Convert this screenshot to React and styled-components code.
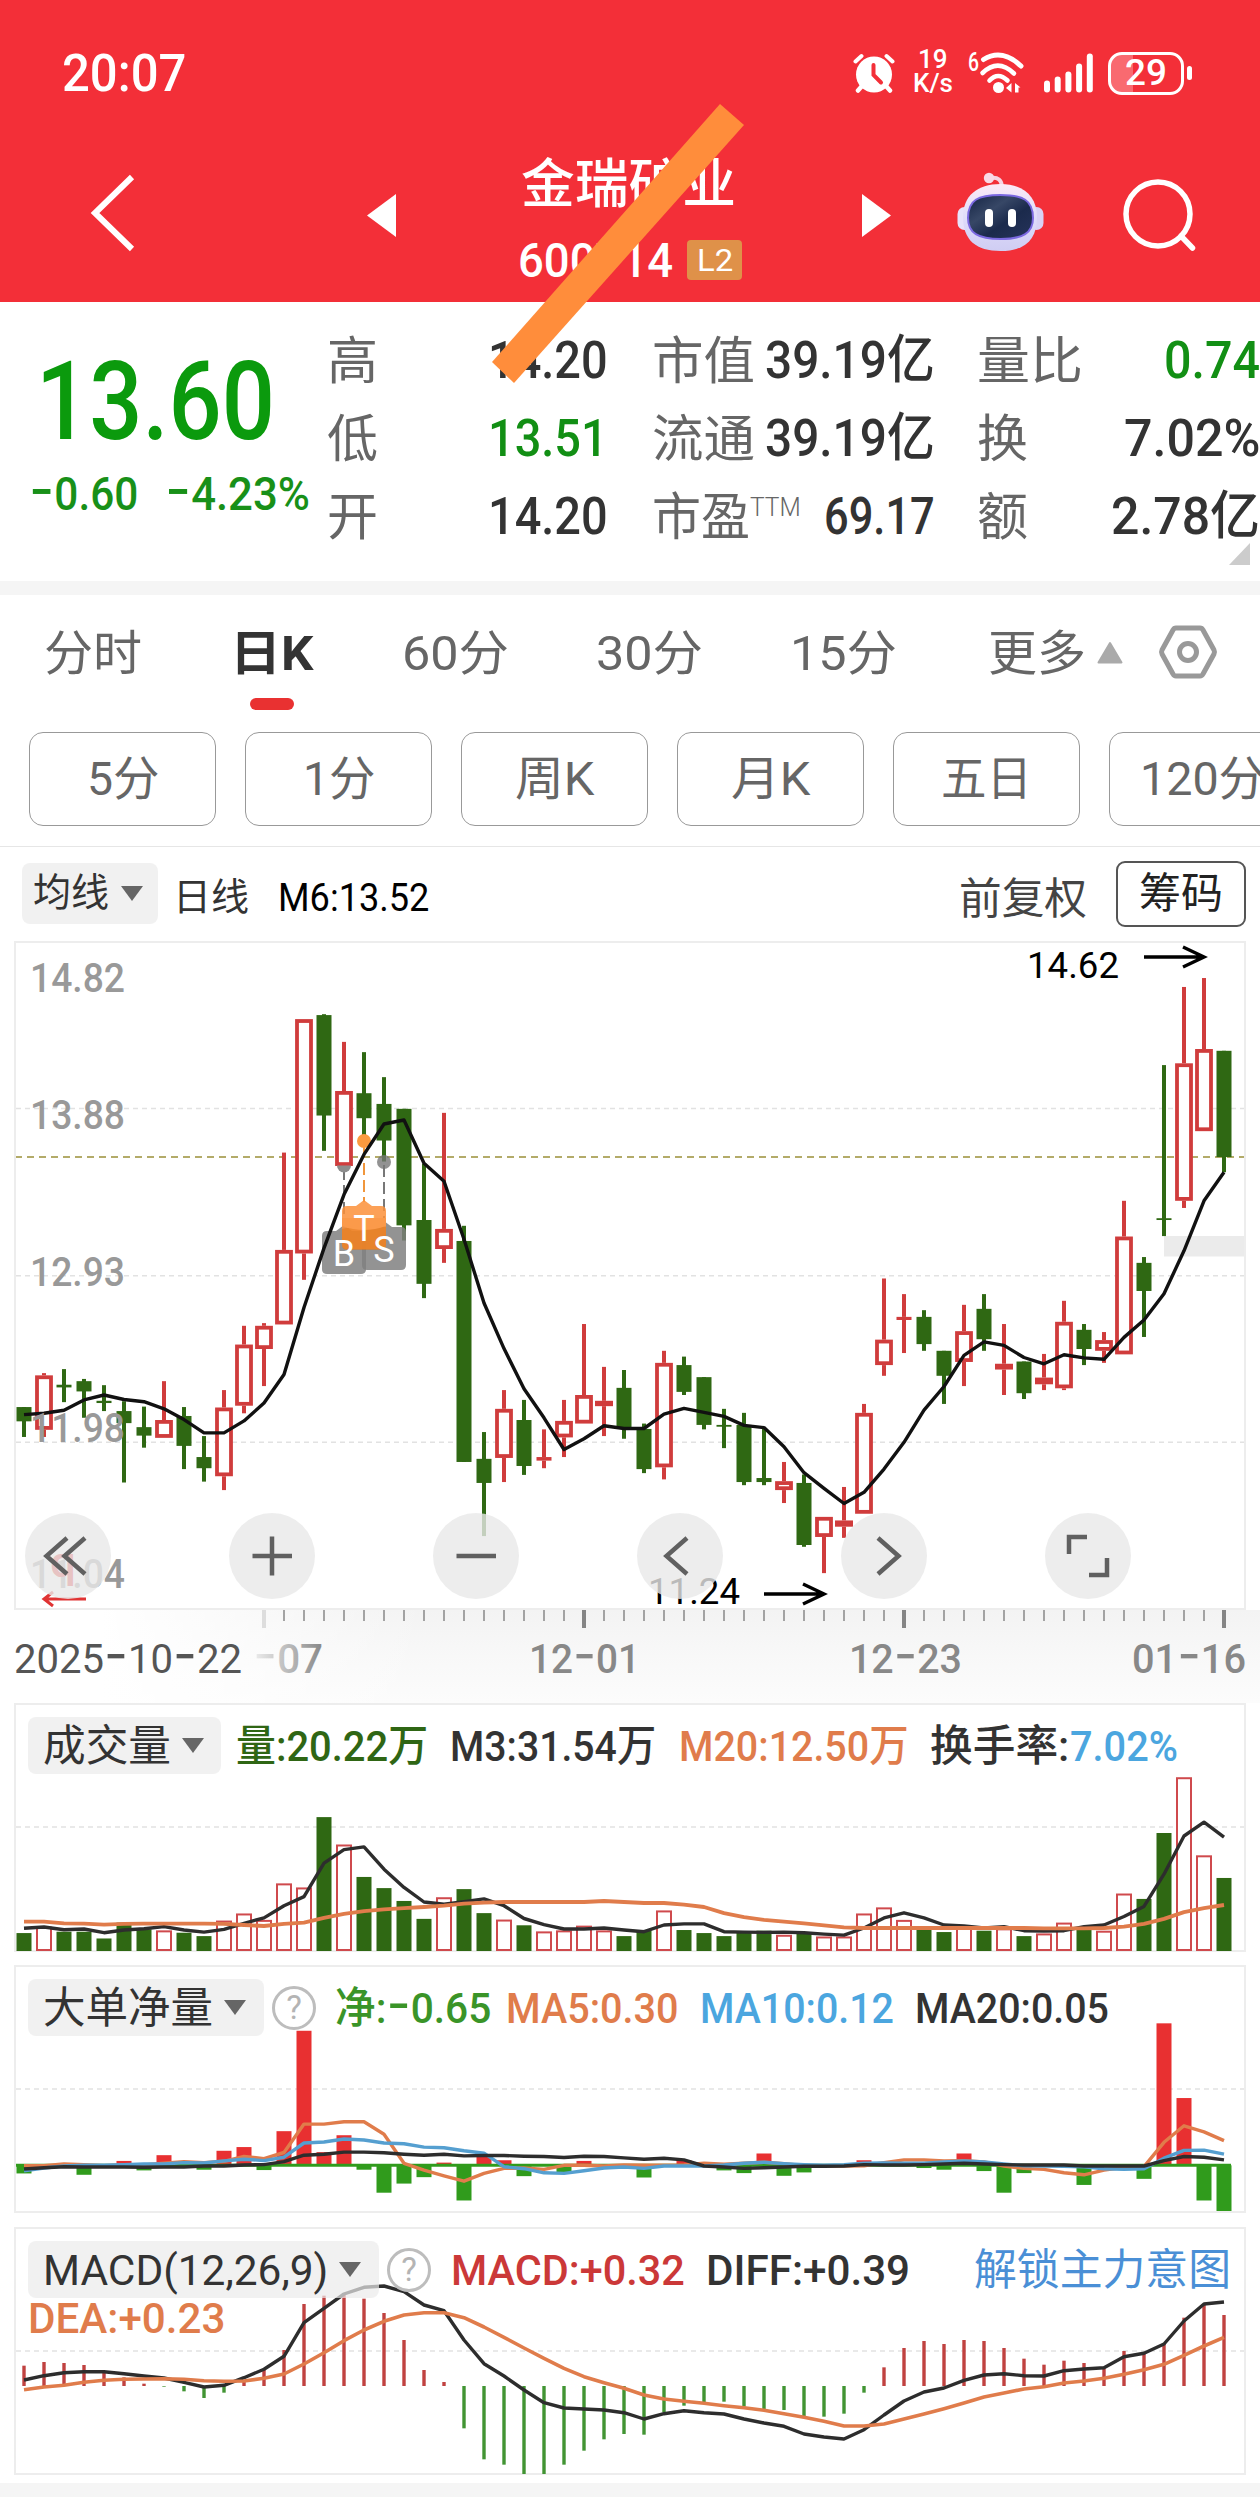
import React, { useLayoutEffect, useRef, useState } from "react";
import styled, { createGlobalStyle } from "styled-components";

const C = {
  brand: "#f32f38",
  up: "#d03c3c",
  down: "#2f6813",
  orange: "#e07c4b",
  blue: "#4ba6df",
  ink: "#333333",
};
const STACK = 'Roboto, "Noto Sans CJK SC", sans-serif';

const Global = createGlobalStyle`
  body { margin: 0; background: #fff; }
  * { box-sizing: border-box; }
  svg { display: block; flex: none; }
  .dash { font-family: Inter, sans-serif; font-size: 1.3em; font-weight: 400; line-height: 0; }
`;

const Page = styled.div`
  position: relative;
  width: 1260px;
  height: 2510px;
  overflow: hidden;
  background: #fff;
  font-family: ${STACK};
  color: ${C.ink};
`;

/* ---------- text that is condensed to a set width ---------- */
const FitBox = styled.span`
  display: inline-block;
  flex: none;
  width: ${(p) => p.$w}px;
  margin-left: ${(p) => p.$ml || 0}px;
  margin-top: ${(p) => p.$mt || 0}px;
  font-size: ${(p) => p.$size}px;
  font-weight: ${(p) => p.$weight || 400};
  line-height: ${(p) => Math.round(p.$size * 1.2)}px;
  color: ${(p) => p.$color || "inherit"};
  white-space: nowrap;
`;
const FitInner = styled.span`
  display: inline-block;
  transform-origin: 0 50%;
`;

const dashed = (s, Tag) =>
  s.split(/(-)/).map((part, i) =>
    part === "-" ? <Tag key={i} className="dash">-</Tag> : part
  );

function Fit({ w, ml, mt, size, weight, color, children }) {
  const ref = useRef(null);
  const [k, setK] = useState(1);
  useLayoutEffect(() => {
    setK(w / ref.current.offsetWidth);
  }, [w, children]);
  return (
    <FitBox $w={w} $ml={ml} $mt={mt} $size={size} $weight={weight} $color={color}>
      <FitInner ref={ref} style={{ transform: `scaleX(${k})` }}>
        {dashed(children, "span")}
      </FitInner>
    </FitBox>
  );
}

/* ---------- header ---------- */
const Header = styled.header`
  height: 302px;
  background: ${C.brand};
  color: #fff;
`;
const StatusBar = styled.div`
  height: 146px;
  display: flex;
  align-items: center;
  padding: 0 68px 0 62px;
`;
const Spacer = styled.div`
  flex: 1;
`;
const StatusGap = styled.div`
  flex: none;
  width: ${(p) => p.$w}px;
`;
const NetSpeed = styled.div`
  display: flex;
  flex-direction: column;
  align-items: center;
  width: 42px;
  margin: 0 0 0 17px;
`;
const Battery = styled.div`
  display: flex;
  align-items: center;
  justify-content: center;
  width: 76px;
  height: 43px;
  margin-left: 14px;
  border: 3.5px solid #fff;
  border-radius: 14px;
  background: linear-gradient(90deg, #f96a70 32%, transparent 32%);
`;
const BatteryTip = styled.div`
  width: 5px;
  height: 14px;
  margin-left: 3px;
  border-radius: 3px;
  background: #fff;
`;
const NavRow = styled.div`
  height: 156px;
  display: grid;
  grid-template-columns: 367px 152px 343px 95px 164px 1fr;
  align-items: start;
`;
const NavCell = styled.div`
  padding-left: ${(p) => p.$pl || 0}px;
  padding-top: ${(p) => p.$pt || 0}px;
`;
const CodeLine = styled.div`
  display: flex;
  align-items: center;
  height: 42px;
  margin-top: 22px;
`;
const Level = styled.span`
  display: flex;
  align-items: center;
  justify-content: center;
  width: 55px;
  height: 40px;
  margin-left: 14px;
  border-radius: 4px;
  background: #df9149;
`;
const Strike = styled.svg`
  position: absolute;
  left: 480px;
  top: 95px;
`;

/* ---------- quote ---------- */
const Quote = styled.section`
  height: 279px;
  display: grid;
  grid-template-columns: 327px 281px 369px 283px;
`;
const LastPrice = styled.div`
  padding: 35px 0 0 36px;
`;
const Change = styled.div`
  display: flex;
  margin-left: -7px;
  margin-top: -2px;
`;
const Column = styled.div`
  padding-top: 20px;
  padding-left: ${(p) => p.$pl || 0}px;
`;
const Pair = styled.div`
  height: 78px;
  display: flex;
  align-items: center;
  justify-content: space-between;
  padding-right: ${(p) => p.$pr || 0}px;
`;
const LabelGroup = styled.span`
  display: flex;
`;
const Corner = styled.i`
  display: block;
  width: 21px;
  height: 22px;
  margin: -13px 10px 0 auto;
  background: #ccc;
  clip-path: polygon(100% 0, 100% 100%, 0 100%);
`;
const Band = styled.div`
  height: 14px;
  background: #f5f5f5;
`;

/* ---------- period tabs ---------- */
const Tabs = styled.nav`
  height: 137px;
  display: flex;
  padding-left: 44px;
  color: #666;
`;
const Tab = styled.div`
  display: flex;
  flex-direction: column;
  align-items: center;
  padding-top: 30px;
  margin-left: ${(p) => p.$ml || 0}px;
`;
const Underline = styled.i`
  width: 44px;
  height: 12px;
  margin-top: 15px;
  border-radius: 6px;
  background: #e93131;
`;
const TabIcon = styled.div`
  padding-top: ${(p) => p.$pt}px;
  margin-left: ${(p) => p.$ml}px;
`;
const Chips = styled.div`
  height: 115px;
  display: flex;
  gap: 29px;
  padding-left: 29px;
  overflow: hidden;
  border-bottom: 1.5px solid #e6e6e6;
`;
const Chip = styled.div`
  flex: none;
  width: 187px;
  height: 94px;
  display: flex;
  align-items: center;
  justify-content: center;
  border: 1.5px solid #999;
  border-radius: 14px;
  color: #666;
`;

/* ---------- indicator bars ---------- */
const MaBar = styled.div`
  height: 94px;
  display: flex;
  align-items: flex-start;
  padding: 16px 14px 0 22px;
`;
const Picker = styled.div`
  display: flex;
  align-items: center;
  flex: none;
  width: ${(p) => p.$w}px;
  height: ${(p) => p.$h}px;
  border-radius: 8px;
  background: rgba(235, 235, 235, 0.7);
`;
const Caret = styled.i`
  width: 22px;
  height: 15px;
  margin-left: ${(p) => p.$ml}px;
  background: #666;
  clip-path: polygon(0 0, 100% 0, 50% 100%);
`;
const Outlined = styled.div`
  display: flex;
  align-items: center;
  justify-content: center;
  width: 130px;
  height: 66px;
  margin: -2px 0 0 29px;
  border: 2px solid #555;
  border-radius: 9px;
`;

/* ---------- chart panels ---------- */
const Panel = styled.section`
  display: grid;
  width: 1232px;
  height: ${(p) => p.$h}px;
  margin: 0 14px ${(p) => p.$mb || 0}px;
  border: 2px solid #ededed;
  > * {
    grid-area: 1 / 1;
    min-width: 0;
  }
`;
const PanelHead = styled.div`
  align-self: start;
  padding: 12px 0 0 12px;
`;
const HeadRow = styled.div`
  height: 57px;
  display: flex;
  align-items: center;
`;
const Help = styled.span`
  display: flex;
  align-items: center;
  justify-content: center;
  flex: none;
  width: 44px;
  height: 44px;
  margin-left: 8px;
  border: 3px solid #bdbdbd;
  border-radius: 50%;
  font-size: 33px;
  line-height: 36px;
  color: #b4b4b4;
`;
const Controls = styled.div`
  align-self: end;
  display: flex;
  gap: 118px;
  padding: 0 0 9px 9px;
`;
const RoundButton = styled.button`
  display: flex;
  align-items: center;
  justify-content: center;
  width: 86px;
  height: 86px;
  padding: 0;
  border: 0;
  border-radius: 50%;
  background: rgba(233, 233, 233, 0.8);
`;
const Axis = styled.div`
  height: 93px;
  background: linear-gradient(90deg, #fff 8%, rgba(255, 255, 255, 0) 34%),
    linear-gradient(180deg, #f3f3f3 0%, #f9f9f9 60%, #fcfcfc 100%);
`;

/* ---------- series data, as screen rows of the 61 sessions ---------- */
const X = (i) => 24 + 20 * i;
const P = (v) => 920 + v / 2.24;
const V = (v) => 1690 + v / 2.958;
const M = (v) => 2200 + v / 3;

const CANDLES = `G 1091 1091 1123 1158|R 1015 1020 1142 1158|G 1006 1041 1047 1080|G 1028 1033 1056 1115|G 1042 1077 1082 1100|G 1078 1100 1127 1260|G 1090 1136 1155 1182|R 1033 1120 1160 1160|G 1091 1111 1178 1230|G 1156 1203 1228 1258|R 1053 1092 1246 1277|R 909 951 1088 1105|R 903 909 961 1044|R 521 739 906 906|R 222 222 747 806|G 211 213 438 517|R 273 383 551 551|G 296 388 444 492|G 352 412 494 541|G 423 423 684 718|G 546 672 815 847|R 432 692 737 768|G 685 719 1214 1214|G 1147 1207 1261 1380|R 1053 1095 1205 1259|G 1075 1120 1223 1243|R 1141 1203 1211 1228|R 1075 1122 1159 1203|R 905 1064 1128 1128|R 1001 1077 1089 1156|G 1008 1048 1137 1162|G 1128 1140 1230 1239|R 965 992 1226 1253|G 978 997 1057 1064|G 1024 1024 1131 1141|G 1095 1131 1135 1183|G 1104 1131 1259 1266|G 1140 1250 1259 1266|R 1214 1257 1277 1306|G 1242 1261 1400 1404|R 1337 1337 1382 1463|R 1270 1345 1359 1384|R 1084 1104 1330 1330|R 803 940 997 1021|R 838 889 896 970|G 874 889 950 965|G 965 965 1021 1084|R 862 921 990 1044|G 838 871 939 965|R 905 994 1007 1064|G 989 989 1060 1073|R 972 1025 1040 1053|R 853 900 1049 1053|G 905 918 961 997|R 923 941 965 992|R 629 709 973 973|G 755 768 831 934|G 325 668 671 708|R 150 321 629 645|R 130 289 473 473|G 293 293 531 565`
  .split("|")
  .map((row) => {
    const [kind, ...v] = row.split(" ");
    return [kind, ...v.map(Number)];
  });

const MA6 = [1108, 1105, 1098, 1075, 1064, 1074, 1079, 1095, 1119, 1149, 1149, 1122, 1082, 1018, 868, 735, 615, 525, 457, 448, 545, 585, 715, 858, 960, 1050, 1115, 1186, 1162, 1133, 1139, 1139, 1107, 1094, 1103, 1112, 1132, 1137, 1180, 1238, 1273, 1307, 1282, 1230, 1170, 1098, 1045, 975, 945, 953, 980, 994, 974, 981, 984, 935, 896, 837, 741, 629, 565];

const VOL = [719, 700, 715, 715, 735, 688, 708, 711, 718, 728, 682, 661, 680, 572, 584, 376, 457, 553, 586, 624, 677, 613, 589, 660, 679, 696, 714, 711, 697, 711, 728, 712, 652, 710, 719, 728, 713, 712, 724, 718, 729, 729, 661, 643, 680, 708, 716, 697, 712, 705, 728, 720, 688, 709, 712, 602, 618, 423, 258, 489, 556];
const VM3 = [705, 701, 709, 707, 718, 710, 706, 700, 710, 716, 708, 690, 674, 638, 611, 512, 472, 464, 530, 584, 627, 634, 626, 618, 638, 676, 694, 707, 707, 704, 710, 715, 695, 692, 692, 715, 716, 717, 716, 718, 722, 725, 704, 674, 659, 674, 695, 698, 704, 700, 712, 713, 712, 700, 695, 670, 640, 545, 432, 391, 435];
const VM20 = [685, 685, 690, 691, 694, 692, 691, 691, 691, 691, 692, 695, 698, 692, 688, 674, 662, 654, 649, 645, 642, 638, 632, 629, 627, 627, 627, 627, 627, 624, 627, 630, 630, 635, 642, 660, 672, 680, 685, 690, 696, 702, 704, 704, 704, 704, 704, 704, 704, 704, 704, 705, 705, 705, 704, 700, 692, 677, 657, 645, 636];

const NET = { 0: 1430, 3: 1434, 5: 1393, 6: 1421, 7: 1376, 9: 1419, 10: 1363, 11: 1352, 12: 1420, 13: 1305, 14: 1008, 15: 1367, 16: 1317, 17: 1419, 18: 1487, 19: 1460, 20: 1441, 21: 1398, 22: 1510, 23: 1378, 24: 1391, 25: 1438, 27: 1427, 28: 1393, 31: 1442, 33: 1391, 34: 1398, 35: 1421, 36: 1429, 37: 1371, 38: 1437, 39: 1427, 42: 1391, 45: 1414, 46: 1419, 47: 1371, 48: 1423, 49: 1487, 50: 1429, 53: 1464, 56: 1446, 57: 986, 58: 1207, 59: 1510, 60: 1543 };
const N5 = [1407, 1407, 1402, 1404, 1407, 1405, 1405, 1400, 1395, 1398, 1394, 1380, 1386, 1368, 1284, 1284, 1277, 1277, 1314, 1400, 1420, 1437, 1453, 1430, 1415, 1414, 1418, 1406, 1406, 1408, 1405, 1406, 1406, 1405, 1400, 1403, 1400, 1397, 1401, 1407, 1408, 1408, 1407, 1398, 1390, 1390, 1393, 1392, 1396, 1408, 1415, 1418, 1428, 1434, 1420, 1412, 1410, 1338, 1289, 1307, 1333];
const N10 = [1422, 1414, 1408, 1406, 1406, 1404, 1402, 1402, 1398, 1399, 1393, 1388, 1392, 1382, 1340, 1337, 1328, 1331, 1340, 1342, 1352, 1354, 1363, 1370, 1410, 1416, 1428, 1430, 1422, 1414, 1411, 1415, 1408, 1408, 1408, 1405, 1400, 1397, 1401, 1404, 1406, 1404, 1400, 1399, 1400, 1400, 1396, 1393, 1396, 1402, 1407, 1408, 1409, 1410, 1416, 1418, 1416, 1385, 1362, 1361, 1373];
const N20 = [1417, 1413, 1410, 1411, 1411, 1411, 1412, 1411, 1411, 1408, 1408, 1405, 1404, 1395, 1376, 1373, 1367, 1367, 1369, 1373, 1376, 1373, 1378, 1377, 1377, 1379, 1380, 1383, 1379, 1380, 1384, 1388, 1385, 1390, 1408, 1411, 1415, 1413, 1411, 1409, 1409, 1408, 1404, 1405, 1405, 1404, 1402, 1400, 1402, 1404, 1405, 1405, 1405, 1408, 1408, 1408, 1408, 1392, 1380, 1382, 1390];

const HIST = [497, 486, 489, 495, 513, 532, 551, 560, 574, 594, 578, 545, 507, 450, 312, 287, 285, 296, 339, 420, 510, 546, 685, 778, 794, 822, 822, 794, 752, 718, 702, 704, 637, 617, 607, 605, 620, 630, 630, 650, 650, 641, 578, 502, 444, 423, 432, 420, 423, 444, 476, 494, 482, 489, 505, 453, 462, 432, 353, 315, 345];
const DIFF = [540, 527, 518, 515, 515, 521, 528, 534, 547, 561, 556, 533, 508, 469, 368, 325, 282, 262, 258, 275, 315, 332, 420, 491, 528, 570, 608, 624, 627, 630, 638, 657, 641, 632, 638, 642, 657, 669, 679, 702, 711, 717, 689, 645, 603, 576, 564, 541, 525, 521, 527, 528, 512, 507, 503, 470, 460, 432, 363, 312, 306];
const DEA = [569, 561, 556, 547, 541, 538, 537, 536, 538, 542, 544, 543, 535, 522, 492, 458, 422, 390, 364, 345, 338, 338, 353, 381, 412, 444, 475, 505, 530, 548, 565, 585, 597, 604, 610, 617, 623, 631, 641, 652, 664, 678, 678, 672, 657, 642, 626, 609, 591, 579, 567, 560, 549, 543, 535, 523, 509, 493, 466, 438, 412];

/* ---------- chart pieces ---------- */
const Line = ({ data, y, color, width = 3.4 }) => (
  <polyline
    points={data.map((v, i) => `${X(i)},${y(v).toFixed(1)}`).join(" ")}
    fill="none"
    stroke={color}
    strokeWidth={width}
    strokeLinejoin="round"
  />
);
const Grid = ({ y }) => (
  <line x1="16" x2="1244" y1={y} y2={y} stroke="#e2e2e2" strokeWidth="1.5" strokeDasharray="5 4" />
);
const Label = ({ x, y, w, size, color, weight = 500, children }) => (
  <text
    x={x}
    y={y}
    textLength={w}
    lengthAdjust="spacingAndGlyphs"
    fontSize={size}
    fontWeight={weight}
    fill={color}
  >
    {dashed(children, "tspan")}
  </text>
);
const Canvas = ({ top, h, children }) => (
  <svg width="1228" height={h} viewBox={`16 ${top} 1228 ${h}`} fontFamily={STACK}>
    {children}
  </svg>
);

function Candle({ i, d }) {
  const [kind, hi, top, bot, lo] = d;
  const x = X(i);
  const t = P(top);
  const b = P(bot);
  if (kind === "G")
    return (
      <g fill={C.down}>
        <rect x={x - 2} width="4" y={P(hi)} height={P(lo) - P(hi)} />
        <rect x={x - 7.5} width="15" y={t} height={Math.max(b - t, 1.8)} />
      </g>
    );
  const thin = b - t < 8;
  return (
    <g>
      <rect x={x - 2} width="4" y={P(hi)} height={Math.max(t - P(hi), 0)} fill={C.up} />
      <rect x={x - 2} width="4" y={b} height={Math.max(P(lo) - b, 0)} fill={C.up} />
      {thin ? (
        <rect x={x - (b - t < 4 ? 7.5 : 9)} width={b - t < 4 ? 15 : 18} y={t} height={b - t} fill={C.up} />
      ) : (
        <rect x={x - 7} width="14" y={t + 1.9} height={b - t - 3.8} fill="#fff" stroke={C.up} strokeWidth="3.8" />
      )}
    </g>
  );
}

function Arrow({ x1, x2, y, color = "#000", head = 21, rise = 10, sw = 3.4 }) {
  const d = x2 > x1 ? -head : head;
  return (
    <path
      d={`M${x1} ${y}H${x2}M${x2 + d} ${y - rise}L${x2} ${y}L${x2 + d} ${y + rise}`}
      fill="none"
      stroke={color}
      strokeWidth={sw}
    />
  );
}

const Tag = ({ x, y, fill }) => (
  <path
    d={`M${x - 22} ${y + 11}q0 -5 5 -5h9l8 -6l8 6h9q5 0 5 5v33q0 5 -5 5h-34q-5 0 -5 -5z`}
    fill={fill}
    fillOpacity="0.85"
  />
);

function PriceChart() {
  return (
    <Canvas top={943} h={665}>
      {[1108.4, 1275.8, 1442.3].map((y) => (
        <Grid key={y} y={y} />
      ))}
      <line x1="15" x2="1246" y1="1157" y2="1157" stroke="#b3ab69" strokeWidth="1.8" strokeDasharray="7 5" />
      <rect x="1164" y="1236" width="82" height="20.5" fill="#ebebeb" />
      {CANDLES.map((d, i) => (
        <Candle key={i} i={i} d={d} />
      ))}
      <g strokeWidth="2" strokeDasharray="12 5">
        <path d="M344 1168V1226M384 1165V1222" stroke="#777" />
        <path d="M364 1146V1202" stroke="#f0963c" />
      </g>
      <path d="M337 1165.5h14a7 7 0 0 1 -14 0z" fill="#8c8c8c" />
      <circle cx="364" cy="1141" r="7" fill="#fb9a3f" />
      <circle cx="384" cy="1162" r="7" fill="#777" fillOpacity="0.8" />
      <Tag x={344} y={1225} fill="#808080" />
      <Tag x={384} y={1221} fill="#808080" />
      <Tag x={364} y={1200} fill="#fb913a" />
      <path d="M342 1229l4 -1l14 -1q5 0 8 0l14 -1l4 1v18q0 5 -5 5h-34q-5 0 -5 -5z" fill="#e57a1a" fillOpacity="0.6" />
      <path d="M342 1226q22 8 44 0v-8h-44z" fill="#fb9a4a" />
      <Line data={MA6} y={P} color="#111" width={3.4} />
      <g fontSize="36" fill="#fff" textAnchor="middle">
        <text x="344" y="1265.5">B</text>
        <text x="384" y="1261.5">S</text>
        <text x="364" y="1240.5">T</text>
      </g>
      <Label x={30} y={991.5} w={95} size={40} color="#999">14.82</Label>
      <Label x={30} y={1128.5} w={95} size={40} color="#999">13.88</Label>
      <Label x={30} y={1286} w={95} size={40} color="#999">12.93</Label>
      <Label x={30} y={1441.5} w={95} size={40} color="#999">11.98</Label>
      <Label x={30} y={1588.3} w={95} size={40} color="#999">11.04</Label>
      <Label x={50} y={1577} w={26} size={42} color="#e02f2f">q</Label>
      <Arrow x1={86} x2={44} y={1599} head={9} rise={7} sw={3} color="#e03333" />
      <Label x={1027} y={978} w={92} size={36.5} color="#000" weight={400}>14.62</Label>
      <Arrow x1={1144} x2={1204} y={957} />
      <Label x={648} y={1603.5} w={92} size={36.5} color="#000" weight={400}>11.24</Label>
      <Arrow x1={764} x2={824} y={1594} />
    </Canvas>
  );
}

function AxisChart() {
  const ticks = [];
  for (let i = 12; i <= 60; i++) {
    const major = (i - 12) % 16 === 0;
    ticks.push(
      <rect
        key={i}
        x={X(i) - (major ? 2 : 0.8)}
        width={major ? 4 : 1.6}
        y="1610"
        height={major ? 18 : 11}
        fill={i === 12 ? "#ddd" : major ? "#858585" : "#8f8f8f"}
      />
    );
  }
  return (
    <svg width="1260" height="93" viewBox="0 1610 1260 93" fontFamily={STACK}>
      <defs>
        <linearGradient id="fade" x1="0" x2="1">
          <stop offset="0" stopColor="#eee" />
          <stop offset="1" stopColor="#888" />
        </linearGradient>
      </defs>
      {ticks}
      <Label x={14} y={1672.5} w={228} size={41} weight={400} color="#555">2025-10-22</Label>
      <Label x={253} y={1672.5} w={70} size={41} color="url(#fade)">-07</Label>
      <Label x={529} y={1672.5} w={111} size={41} color="#888">12-01</Label>
      <Label x={849} y={1672.5} w={113} size={41} color="#888">12-23</Label>
      <Label x={1132} y={1672.5} w={114} size={41} color="#888">01-16</Label>
    </svg>
  );
}

function VolumeChart() {
  const base = 1951;
  return (
    <Canvas top={1705} h={246}>
      <Grid y={1827} />
      {VOL.map((v, i) =>
        CANDLES[i][0] === "G" ? (
          <rect key={i} x={X(i) - 7.5} width="15" y={V(v)} height={base - V(v)} fill={C.down} />
        ) : (
          <rect key={i} x={X(i) - 7} width="14" y={V(v) + 1} height={base - V(v) - 2} fill="#fff" stroke="#cf4a4d" strokeWidth="2" />
        )
      )}
      <Line data={VM3} y={V} color="#2d2d2d" />
      <Line data={VM20} y={V} color={C.orange} width={3.8} />
    </Canvas>
  );
}

function NetChart() {
  const zero = V(1406);
  return (
    <Canvas top={1967} h={244}>
      <Grid y={2089} />
      {Object.entries(NET).map(([i, v]) => {
        const y = V(v);
        const up = y < zero;
        return (
          <rect key={i} x={X(+i) - 7.5} width="15" y={up ? y : zero} height={Math.abs(y - zero)} fill={up ? "#e83031" : "#309b1c"} />
        );
      })}
      <line x1="14" x2="1231" y1={zero} y2={zero} stroke="#309b1c" strokeWidth="3" />
      <Line data={N5} y={V} color={C.orange} />
      <Line data={N10} y={V} color="#559fd0" />
      <Line data={N20} y={V} color="#2d2d2d" />
    </Canvas>
  );
}

function MacdChart() {
  return (
    <Canvas top={2229} h={245}>
      <Grid y={2351} />
      {HIST.map((v, i) => {
        const up = v < 558;
        return (
          <rect key={i} x={X(i) - 1.7} width="3.4" y={up ? M(v) : 2386} height={Math.abs(M(v) - 2386)} fill={up ? "#c04240" : "#429433"} />
        );
      })}
      <Line data={DIFF} y={M} color="#2d2d2d" />
      <Line data={DEA} y={M} color={C.orange} width={3.6} />
    </Canvas>
  );
}

/* ---------- icons ---------- */
const AlarmIcon = () => (
  <svg width="42" height="40" viewBox="0 0 42 40" fill="none" stroke="#fff" strokeLinecap="round">
    <circle cx="21" cy="21.5" r="18" fill="#fff" stroke="none" />
    <path d="M2.5 8.5L8.5 3M39.5 8.5L33.5 3" strokeWidth="4" />
    <path d="M9 33L5 37.5M33 33L37 37.5" strokeWidth="4.5" />
    <path d="M20.5 12V22L28 29.5" stroke={C.brand} strokeWidth="4" />
  </svg>
);
const WifiIcon = () => (
  <svg width="56" height="44" viewBox="0 0 56 44" fill="none" stroke="#fff" strokeLinecap="round">
    <text x="0" y="20" fontSize="25" fontWeight="500" textLength="11" lengthAdjust="spacingAndGlyphs" fill="#fff" stroke="none" fontFamily={STACK}>6</text>
    <path d="M15.500 8.500Q34 -3 53 15" strokeWidth="5" />
    <path d="M14.500 22Q30 7 46 22.500" strokeWidth="4.600" />
    <path d="M21.500 29.500Q30 20.500 39.500 29.500" strokeWidth="4.600" />
    <circle cx="30.500" cy="36.500" r="5.500" fill="#fff" stroke="none" />
    <path d="M43.500 32v9.500l-5.500 -4.500zM47 32l5.500 4.500h-2v5h-3.500z" fill="#fff" stroke="none" />
  </svg>
);
const SignalIcon = () => (
  <svg width="50" height="40" viewBox="0 0 50 40" fill="#fff">
    {[12, 16, 21, 29, 39].map((h, i) => (
      <rect key={i} x={i * 10.7} y={39.5 - h} width="6" height={h} rx="3" />
    ))}
  </svg>
);
const RobotIcon = () => (
  <svg width="88" height="81" viewBox="0 0 88 81">
    <defs>
      <linearGradient id="shell" x1="0" y1="0" x2="0" y2="1">
        <stop offset="0" stopColor="#fbeaf6" />
        <stop offset="0.5" stopColor="#dfdcfa" />
        <stop offset="1" stopColor="#cfcdf3" />
      </linearGradient>
      <linearGradient id="visor" x1="0" y1="0" x2="1" y2="1">
        <stop offset="0" stopColor="#142343" />
        <stop offset="0.35" stopColor="#374766" />
        <stop offset="0.6" stopColor="#1b2a4c" />
        <stop offset="1" stopColor="#26345b" />
      </linearGradient>
    </defs>
    <path d="M33 6q12 -2 12 10" fill="none" stroke="#f6d3e2" strokeWidth="4" />
    <circle cx="32" cy="6" r="5.2" fill="#f9d9e6" />
    <rect x="0.5" y="35" width="14" height="23" rx="7" fill="#e7e2fb" />
    <rect x="72.5" y="35" width="14" height="23" rx="7" fill="#d9d2f5" />
    <path d="M43.5 12C66 12 80 24 80 45C80 68 68 79 43.5 79C19 79 6 68 6 45C6 24 20 12 43.5 12z" fill="url(#shell)" />
    <path d="M43.5 23C66 23 76 28 76 46C76 61 66 67 43.5 67C21 67 11 61 11 46C11 28 21 23 43.5 23z" fill="url(#visor)" stroke="#7b69e0" strokeWidth="2" />
    <rect x="28" y="37" width="8" height="18" rx="4" fill="#fff" />
    <rect x="51" y="37" width="8" height="18" rx="4" fill="#fff" />
  </svg>
);

const GLYPHS = [
  "M42 25L21.5 43L42 61M60 25L39.5 43L60 61",
  "M43 23.5V62.5M23.5 43H63",
  "M23.5 43H63",
  "M50 25L29.5 43L50 61",
  "M37 25L57.5 43L37 61",
  "M24 41V24H42M62 45V62H44",
];

const Picked = ({ w, tw, children }) => (
  <Picker $w={w} $h={57}>
    <Fit w={tw} ml={15} size={43}>{children}</Fit>
    <Caret $ml={11} />
  </Picker>
);

const Stat = ({ label, lw, value, vw, color, sup, pr }) => (
  <Pair $pr={pr}>
    <LabelGroup>
      <Fit w={lw} size={51} color="#666">{label}</Fit>
      {sup && <Fit w={51} size={26} weight={300} mt={5} color="#666">{sup}</Fit>}
    </LabelGroup>
    <Fit w={vw} size={52} weight={500} color={color}>{value}</Fit>
  </Pair>
);

export default function App() {
  return (
    <Page>
      <Global />
      <Header>
        <StatusBar>
          <Fit w={124} size={51} weight={500}>20:07</Fit>
          <Spacer />
          <AlarmIcon />
          <NetSpeed>
            <Fit w={30} size={26} weight={500} mt={-3}>19</Fit>
            <Fit w={40} size={26} weight={500} mt={-7}>K/s</Fit>
          </NetSpeed>
          <StatusGap $w={14} />
          <WifiIcon />
          <StatusGap $w={20} />
          <SignalIcon />
          <Battery>
            <Fit w={42} size={36} weight={500}>29</Fit>
          </Battery>
          <BatteryTip />
        </StatusBar>
        <NavRow>
          <NavCell $pl={90} $pt={28}>
            <svg width="48" height="78" viewBox="0 0 48 78" fill="none" stroke="#fff" strokeWidth="6">
              <path d="M42 3L5 39L42 75" />
            </svg>
          </NavCell>
          <NavCell $pt={48}>
            <svg width="29" height="43" viewBox="0 0 29 43">
              <path d="M29 0V43L0 21.5z" fill="#fff" />
            </svg>
          </NavCell>
          <NavCell $pt={7}>
            <Fit w={215} ml={2} size={53} weight={500}>金瑞矿业</Fit>
            <CodeLine>
              <Fit w={155} ml={-1} size={49} weight={500}>600714</Fit>
              <Level>
                <Fit w={36} size={32}>L2</Fit>
              </Level>
            </CodeLine>
          </NavCell>
          <NavCell $pt={48}>
            <svg width="29" height="43" viewBox="0 0 29 43">
              <path d="M0 0V43L29 21.5z" fill="#fff" />
            </svg>
          </NavCell>
          <NavCell $pt={26}>
            <RobotIcon />
          </NavCell>
          <NavCell $pt={31}>
            <svg width="76" height="76" viewBox="0 0 76 76" fill="none" stroke="#fff" strokeWidth="5.5" strokeLinecap="round">
              <circle cx="37" cy="37" r="32" />
              <path d="M60 59L71.5 71" />
            </svg>
          </NavCell>
        </NavRow>
      </Header>

      <Quote>
        <LastPrice>
          <Fit w={239} size={109} weight={500} color="#0b9a0d">13.60</Fit>
          <Change>
            <Fit w={109} size={47} weight={500} color="#189018">-0.60</Fit>
            <Fit w={145} ml={27} size={47} weight={500} color="#189018">-4.23%</Fit>
          </Change>
        </LastPrice>
        <Column>
          <Stat label="高" lw={51} value="14.20" vw={120} />
          <Stat label="低" lw={51} value="13.51" vw={120} color="#128f14" />
          <Stat label="开" lw={51} value="14.20" vw={120} />
        </Column>
        <Column $pl={44}>
          <Stat label="市值" lw={103} value="39.19亿" vw={170} pr={42} />
          <Stat label="流通" lw={103} value="39.19亿" vw={170} pr={42} />
          <Stat label="市盈" lw={98} sup="TTM" value="69.17" vw={111} pr={42} />
        </Column>
        <Column>
          <Stat label="量比" lw={106} value="0.74" vw={96} pr={-1} color="#128f14" />
          <Stat label="换" lw={51} value="7.02%" vw={136} />
          <Stat label="额" lw={51} value="2.78亿" vw={149} />
          <Corner />
        </Column>
      </Quote>
      <Band />

      <Tabs>
        <Tab><Fit w={98} size={48}>分时</Fit></Tab>
        <Tab $ml={88}>
          <Fit w={84} size={48} weight={700} color="#333">日K</Fit>
          <Underline />
        </Tab>
        <Tab $ml={88}><Fit w={107} size={48}>60分</Fit></Tab>
        <Tab $ml={87}><Fit w={107} size={48}>30分</Fit></Tab>
        <Tab $ml={87}><Fit w={107} size={48}>15分</Fit></Tab>
        <Tab $ml={91}><Fit w={98} size={48}>更多</Fit></Tab>
        <TabIcon $ml={11} $pt={46}>
          <svg width="26" height="23" viewBox="0 0 26 23">
            <path d="M13 2L24.5 21.5H1.5z" fill="#aaa" stroke="#aaa" strokeWidth="2" strokeLinejoin="round" />
          </svg>
        </TabIcon>
        <TabIcon $ml={35} $pt={29}>
          <svg width="60" height="56" viewBox="0 0 60 56" fill="none" stroke="#999" strokeWidth="5" strokeLinejoin="round">
            <path d="M18 4H42Q44 4 45 6L56 26Q57 28 56 30L45 50Q44 52 42 52H18Q16 52 15 50L4 30Q3 28 4 26L15 6Q16 4 18 4z" />
            <circle cx="30" cy="28" r="8.5" />
          </svg>
        </TabIcon>
      </Tabs>

      <Chips>
        <Chip><Fit w={72} size={47}>5分</Fit></Chip>
        <Chip><Fit w={72} size={47}>1分</Fit></Chip>
        <Chip><Fit w={80} size={47}>周K</Fit></Chip>
        <Chip><Fit w={80} size={47}>月K</Fit></Chip>
        <Chip><Fit w={91} size={47}>五日</Fit></Chip>
        <Chip><Fit w={125} size={47}>120分</Fit></Chip>
      </Chips>

      <MaBar>
        <Picker $w={136} $h={61}>
          <Fit w={76} ml={11} size={39}>均线</Fit>
          <Caret $ml={12} />
        </Picker>
        <Fit w={76} ml={15} mt={11} size={38}>日线</Fit>
        <Fit w={151} ml={29} mt={11} size={39.5} color="#000">M6:13.52</Fit>
        <Spacer />
        <Fit w={128} mt={10} size={43} color="#444">前复权</Fit>
        <Outlined>
          <Fit w={84} size={42} color="#222">筹码</Fit>
        </Outlined>
      </MaBar>

      <Panel $h={669}>
        <PriceChart />
        <Controls>
          {GLYPHS.map((d) => (
            <RoundButton key={d}>
              <svg width="86" height="86" viewBox="0 0 86 86" fill="none" stroke="#606060" strokeWidth="4.5">
                <path d={d} />
              </svg>
            </RoundButton>
          ))}
        </Controls>
      </Panel>

      <Axis>
        <AxisChart />
      </Axis>

      <Panel $h={249} $mb={13}>
        <VolumeChart />
        <PanelHead>
          <HeadRow>
            <Picked w={193} tw={128}>成交量</Picked>
            <Fit w={192} ml={15} size={43} weight={500} color="#2f6614">量:20.22万</Fit>
            <Fit w={206} ml={22} size={43} weight={500}>M3:31.54万</Fit>
            <Fit w={230} ml={23} size={43} weight={500} color={C.orange}>M20:12.50万</Fit>
            <Fit w={139} ml={21} size={43} weight={500}>换手率:</Fit>
            <Fit w={108} ml={1} size={43} weight={500} color={C.blue}>7.02%</Fit>
          </HeadRow>
        </PanelHead>
      </Panel>

      <Panel $h={248} $mb={14}>
        <NetChart />
        <PanelHead>
          <HeadRow>
            <Picked w={236} tw={170}>大单净量</Picked>
            <Help>?</Help>
            <Fit w={156} ml={19} size={43} weight={500} color="#3a9428">净:-0.65</Fit>
            <Fit w={173} ml={15} size={43} weight={500} color={C.orange}>MA5:0.30</Fit>
            <Fit w={194} ml={21} size={43} weight={500} color={C.blue}>MA10:0.12</Fit>
            <Fit w={194} ml={21} size={43} weight={500}>MA20:0.05</Fit>
          </HeadRow>
        </PanelHead>
      </Panel>

      <Panel $h={248} $mb={8}>
        <MacdChart />
        <PanelHead>
          <HeadRow>
            <Picked w={351} tw={285}>MACD(12,26,9)</Picked>
            <Help>?</Help>
            <Fit w={234} ml={20} size={43} weight={500} color="#cb3838">MACD:+0.32</Fit>
            <Fit w={204} ml={21} size={43} weight={500}>DIFF:+0.39</Fit>
            <Fit w={257} ml={64} size={43} color="#4a8fd6">解锁主力意图</Fit>
          </HeadRow>
          <Fit w={197} ml={0} mt={-6} size={43} weight={500} color={C.orange}>DEA:+0.23</Fit>
        </PanelHead>
      </Panel>
      <Band />

      <Strike width="270" height="295" viewBox="480 95 270 295">
        <polygon points="720,104 744,125 514,383 492,362" fill="#ff8d3b" />
      </Strike>
    </Page>
  );
}
